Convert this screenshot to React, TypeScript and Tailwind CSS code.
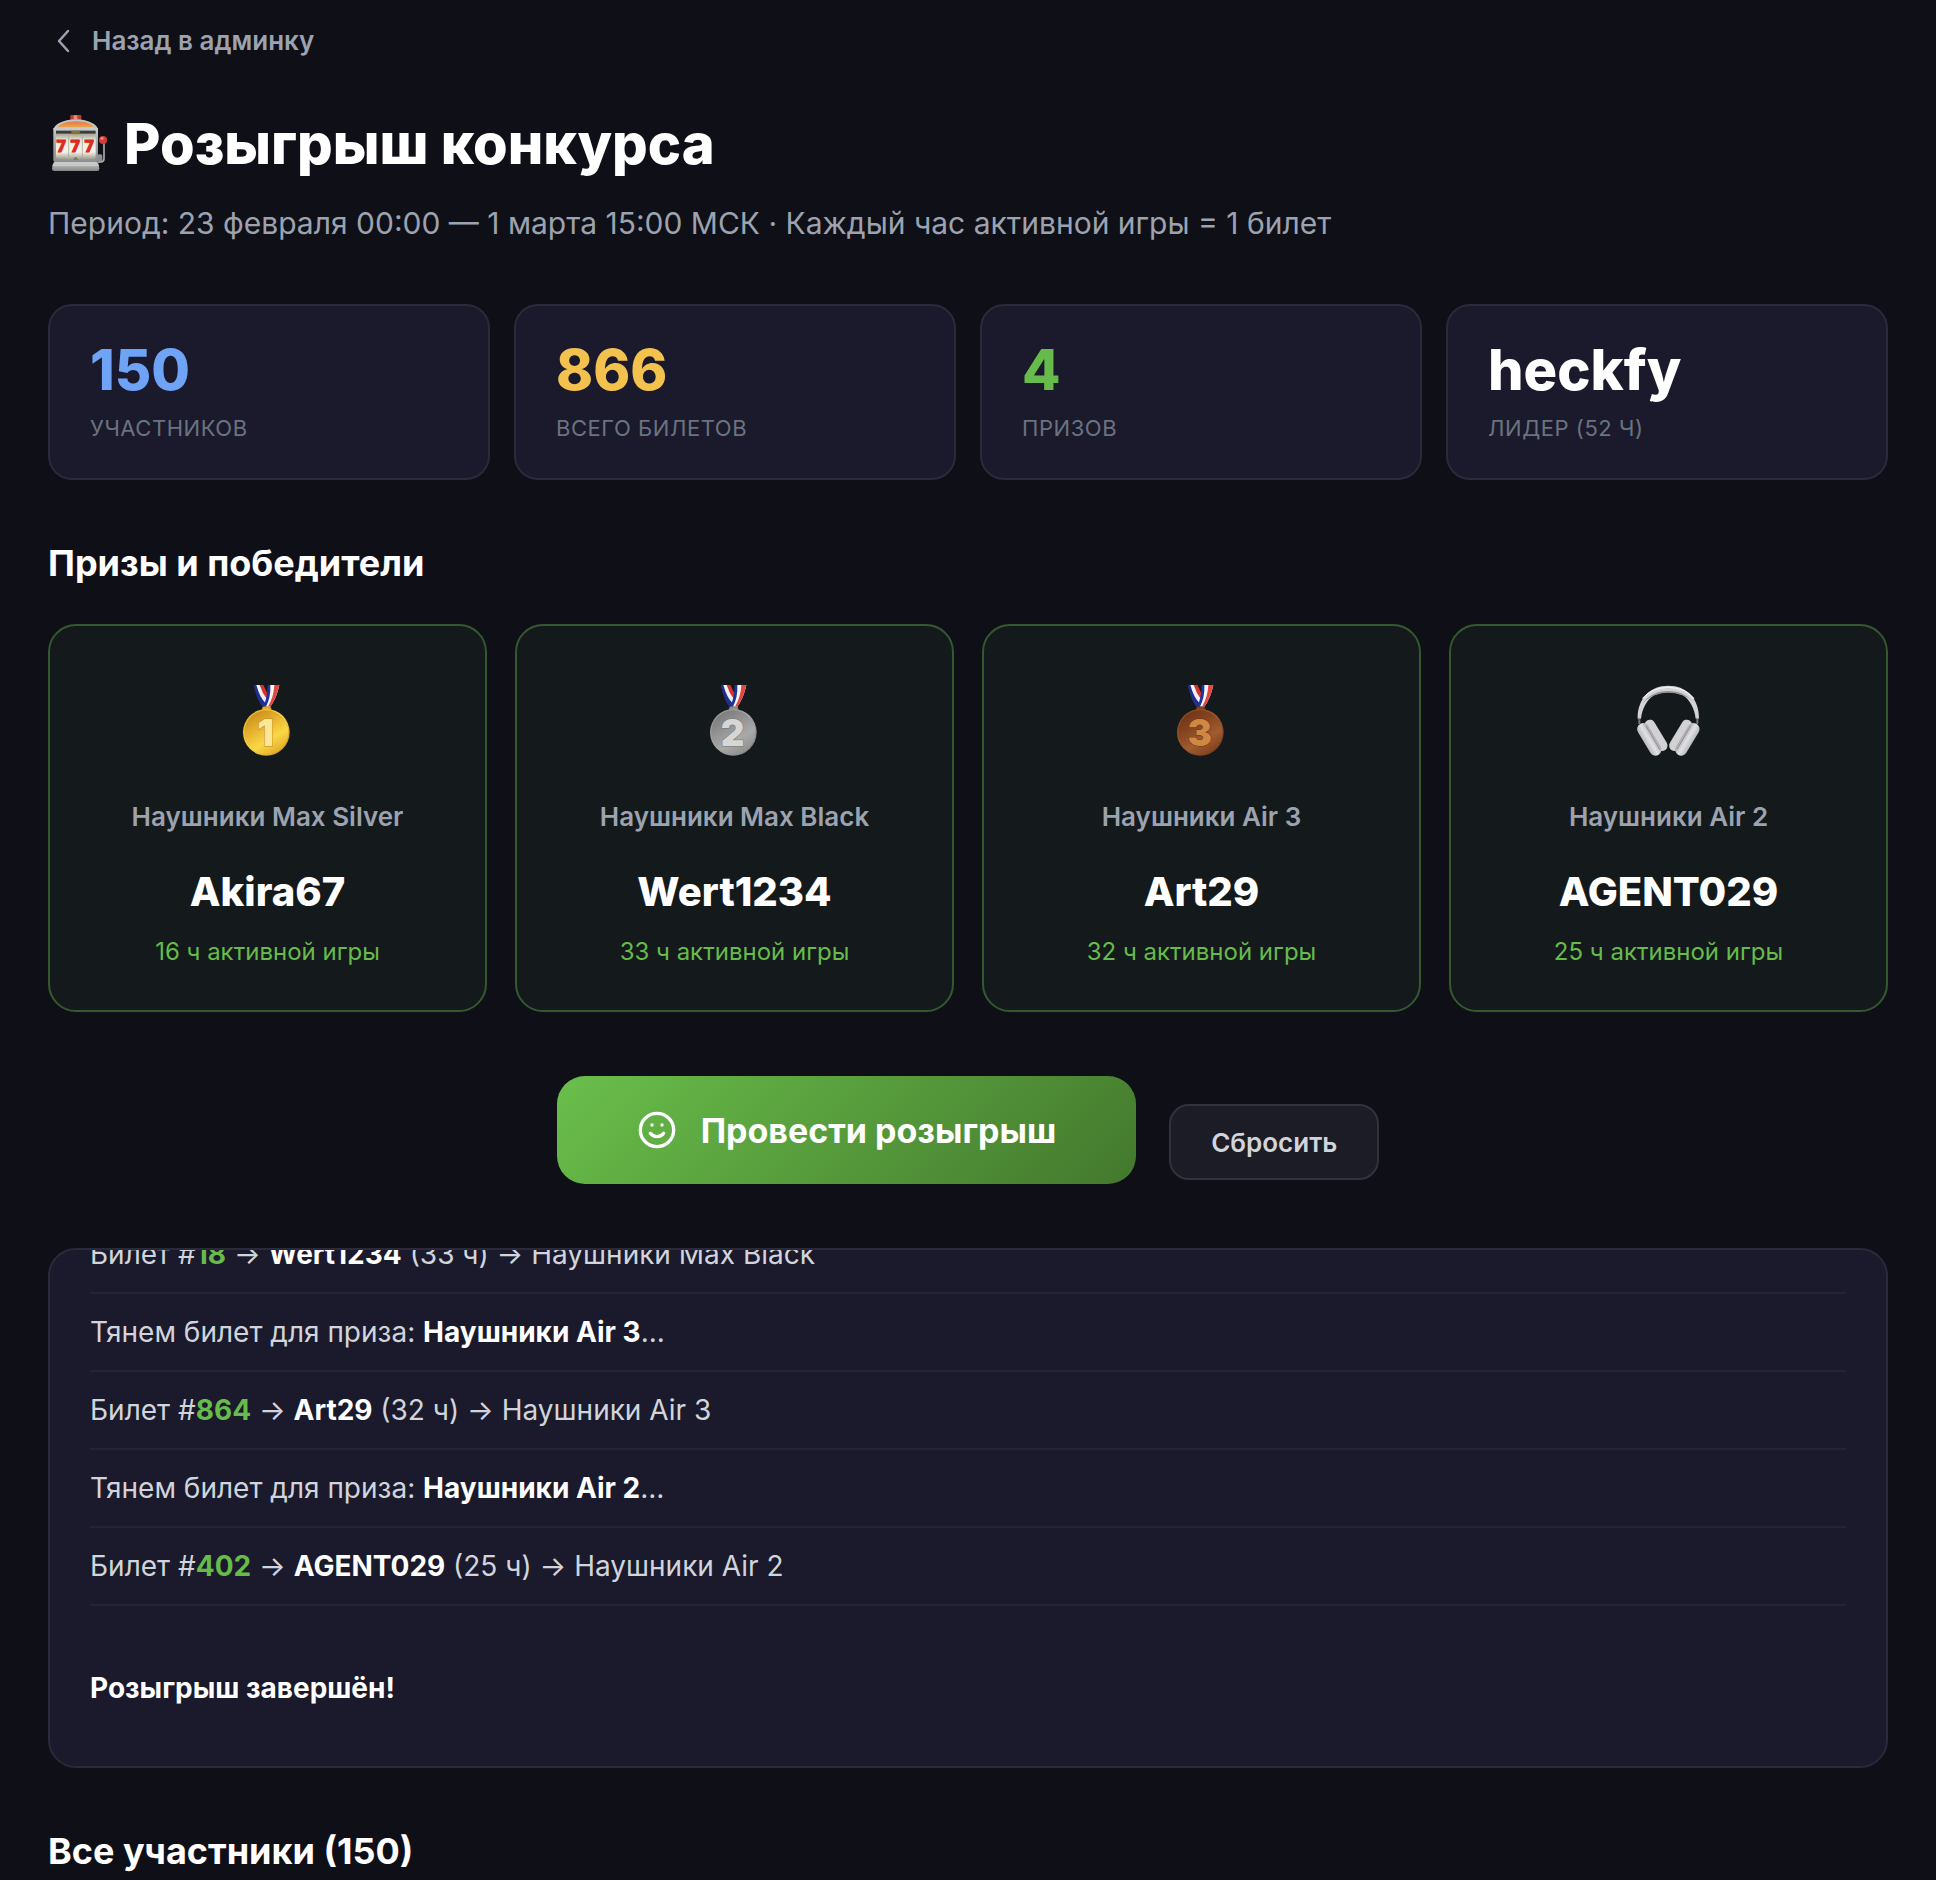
import React from 'react';
import { Smile } from 'lucide-react';

type Stat = { value: string; label: string; color: string };
type Medal = { digit: string; light: string; mid: string; dark: string; text: string };
type Winner = { id: string; prize: string; name: string; hours: number; medal?: Medal };
type LogEntry =
  | { kind: 'draw'; prize: string }
  | { kind: 'ticket'; ticket: number; name: string; hours: number; prize: string };

const stats: Stat[] = [
  { value: '150', label: 'Участников', color: 'text-[#6ea3f5]' },
  { value: '866', label: 'Всего билетов', color: 'text-[#f2c14e]' },
  { value: '4', label: 'Призов', color: 'text-[#66bb4a]' },
  { value: 'heckfy', label: 'Лидер (52 ч)', color: 'text-white' },
];

const winners: Winner[] = [
  {
    id: 'gold',
    prize: 'Наушники Max Silver',
    name: 'Akira67',
    hours: 16,
    medal: { digit: '1', light: '#f9d845', mid: '#e3ad2c', dark: '#c0851c', text: '#fbe796' },
  },
  {
    id: 'silver',
    prize: 'Наушники Max Black',
    name: 'Wert1234',
    hours: 33,
    medal: { digit: '2', light: '#a9a9a9', mid: '#8f8f8f', dark: '#757575', text: '#d6d6d6' },
  },
  {
    id: 'bronze',
    prize: 'Наушники Air 3',
    name: 'Art29',
    hours: 32,
    medal: { digit: '3', light: '#a05c30', mid: '#83421e', dark: '#6a3113', text: '#cf8843' },
  },
  { id: 'headphones', prize: 'Наушники Air 2', name: 'AGENT029', hours: 25 },
];

const log: LogEntry[] = [
  { kind: 'ticket', ticket: 18, name: 'Wert1234', hours: 33, prize: 'Наушники Max Black' },
  { kind: 'draw', prize: 'Наушники Air 3' },
  { kind: 'ticket', ticket: 864, name: 'Art29', hours: 32, prize: 'Наушники Air 3' },
  { kind: 'draw', prize: 'Наушники Air 2' },
  { kind: 'ticket', ticket: 402, name: 'AGENT029', hours: 25, prize: 'Наушники Air 2' },
];

function SlotMachine() {
  return (
    <svg viewBox="24 36 180 192" className="w-[60px] h-16 shrink-0" aria-hidden="true">
      <defs>
        <linearGradient id="slot-body" x1="0" y1="0" x2="0" y2="1">
          <stop offset="0" stopColor="#c9ccca" />
          <stop offset="0.5" stopColor="#a3a5a3" />
          <stop offset="1" stopColor="#8d8f8d" />
        </linearGradient>
        <linearGradient id="slot-reel" x1="0" y1="0" x2="0" y2="1">
          <stop offset="0" stopColor="#a9a797" />
          <stop offset="0.25" stopColor="#efede0" />
          <stop offset="0.7" stopColor="#f4f2e8" />
          <stop offset="1" stopColor="#98968a" />
        </linearGradient>
        <linearGradient id="slot-dome" x1="0" y1="0" x2="0" y2="1">
          <stop offset="0" stopColor="#e9755a" />
          <stop offset="1" stopColor="#e8a545" />
        </linearGradient>
        <linearGradient id="slot-base" x1="0" y1="0" x2="0" y2="1">
          <stop offset="0" stopColor="#d9dcda" />
          <stop offset="0.45" stopColor="#a9acaa" />
          <stop offset="1" stopColor="#858886" />
        </linearGradient>
      </defs>
      <rect x="91" y="45" width="33" height="17" rx="3" fill="#b54135" />
      <rect x="101" y="46" width="11" height="12" rx="2" fill="#f08a78" />
      <path d="M40 90 Q42 78 56 70 Q80 58 107 58 Q136 58 158 70 Q173 78 174 90 Z" fill="#c3c6c4" />
      <path d="M53 81 Q60 72 78 67 Q107 60 138 67 Q155 72 161 81 Z" fill="url(#slot-dome)" />
      <path d="M40 84 H174 V178 Q174 188 166 190 H48 Q40 188 40 178 Z" fill="url(#slot-body)" />
      <rect x="48" y="92" width="119" height="9" fill="#3b3b38" />
      <path d="M92 92 H122 L116 104 H98 Z" fill="#8b712b" />
      <path d="M48 103 H167 V168 Q167 178 156 179 H59 Q48 178 48 168 Z" fill="url(#slot-reel)" />
      <path d="M86 103 V179 M127 103 V179" stroke="#aaa89d" strokeWidth="2.5" />
      <path d="M98 179 L107 170 L116 179 Z" fill="#77735e" />
      <g fill="#dd2a20" stroke="#dd2a20" strokeWidth="3" fontFamily="Roboto, sans-serif" fontWeight="900" fontSize="50" textAnchor="middle">
        <text x="64" y="157">7</text>
        <text x="106" y="157">7</text>
        <text x="148" y="157">7</text>
      </g>
      <path d="M42 187 H172 Q178 194 178 206 Q178 213 171 213 H43 Q36 213 36 206 Q36 194 42 187 Z" fill="url(#slot-base)" />
      <path d="M38 196 H176" stroke="#dcdedd" strokeWidth="2" />
      <rect x="172" y="163" width="15" height="22" rx="5" fill="#8c8f8f" />
      <path d="M192 126 V176 Q192 185 182 186 L172 187" fill="none" stroke="#a7aaaa" strokeWidth="5" />
      <circle cx="189" cy="120" r="12" fill="#d63a38" />
      <circle cx="186" cy="115" r="5" fill="#f08078" />
    </svg>
  );
}

function MedalIcon({ id, medal }: { id: string; medal: Medal }) {
  return (
    <svg viewBox="49 36 192 240" className="w-16 h-20" aria-hidden="true">
      <defs>
        <linearGradient id={`${id}-rim`} x1="0" y1="0" x2="1" y2="1">
          <stop offset="0" stopColor={medal.mid} />
          <stop offset="0.5" stopColor={medal.light} />
          <stop offset="1" stopColor={medal.dark} />
        </linearGradient>
        <linearGradient id={`${id}-face`} x1="0.1" y1="0" x2="0.7" y2="1">
          <stop offset="0" stopColor={medal.dark} />
          <stop offset="0.35" stopColor={medal.mid} />
          <stop offset="0.7" stopColor={medal.light} />
          <stop offset="1" stopColor={medal.mid} />
        </linearGradient>
      </defs>
      <path d="M102 45 H128 L145 86 L134 112 L126 108 Q112 90 102 45 Z" fill="#1f2f8f" />
      <path d="M110 45 H128 L144 84 L138 100 Q120 82 110 45 Z" fill="#f2f2f5" />
      <path d="M120 45 H131 L146 76 L142 88 Q128 70 120 45 Z" fill="#d8322f" />
      <path d="M144 45 H179 Q172 82 151 112 H130 Q144 82 144 45 Z" fill="#1f33a0" />
      <path d="M152 45 H179 Q172 82 151 112 H138 Q154 82 152 45 Z" fill="#f5f5f8" />
      <path d="M164 45 H179 Q172 82 152 110 L146 108 Q162 82 164 45 Z" fill="#e2483f" />
      <rect x="128" y="110" width="26" height="13" rx="5" fill={medal.mid} stroke={medal.dark} strokeWidth="2" />
      <circle cx="140" cy="187" r="70" fill={`url(#${id}-rim)`} />
      <circle cx="140" cy="187" r="66" fill={`url(#${id}-face)`} />
      <text
        x="138"
        y="227"
        textAnchor="middle"
        fontFamily="Inter, sans-serif"
        fontWeight="900"
        fontSize="110"
        fill={medal.text}
        stroke={medal.dark}
        strokeWidth="3"
        paintOrder="stroke"
      >
        {medal.digit}
      </text>
    </svg>
  );
}

function HeadphonesIcon() {
  return (
    <svg viewBox="49 36 192 240" className="w-16 h-20" aria-hidden="true">
      <defs>
        <linearGradient id="hp-cup-left" x1="0" y1="0" x2="1" y2="0">
          <stop offset="0" stopColor="#b9b9bd" />
          <stop offset="0.5" stopColor="#e2e2e6" />
          <stop offset="1" stopColor="#a9a9ad" />
        </linearGradient>
        <linearGradient id="hp-cup-right" x1="1" y1="0" x2="0" y2="0">
          <stop offset="0" stopColor="#b9b9bd" />
          <stop offset="0.5" stopColor="#e2e2e6" />
          <stop offset="1" stopColor="#a9a9ad" />
        </linearGradient>
      </defs>
      <path
        d="M51 146 C50 86 88 47 143 47 C198 47 236 86 235 146 L225 146 C222 118 208 88 186 76 Q143 58 101 76 C78 88 64 118 61 146 Z"
        fill="#d3d3d5"
      />
      <path d="M66 101 Q92 63 143 63 Q194 63 220 101 Q206 82 184 75 Q143 62 103 75 Q80 84 66 101 Z" fill="#929294" />
      <path d="M66 86 Q94 52 143 52 Q192 52 220 86" fill="none" stroke="#f0f0f1" strokeWidth="4" />
      <path d="M56 145 V162 M230 145 V162" stroke="#77777a" strokeWidth="6" />
      <rect x="-16" y="-52" width="32" height="104" rx="16" transform="translate(106 196) rotate(-31)" fill="#d2d2d5" />
      <rect x="-18" y="-54" width="36" height="108" rx="18" transform="translate(86 208) rotate(-31)" fill="url(#hp-cup-left)" />
      <path d="M76 168 L117 238" stroke="#8e8e92" strokeWidth="3" strokeLinecap="round" />
      <rect x="-16" y="-52" width="32" height="104" rx="16" transform="translate(180 196) rotate(31)" fill="#d2d2d5" />
      <rect x="-18" y="-54" width="36" height="108" rx="18" transform="translate(200 208) rotate(31)" fill="url(#hp-cup-right)" />
      <path d="M210 168 L169 238" stroke="#8e8e92" strokeWidth="3" strokeLinecap="round" />
    </svg>
  );
}

function StatCard({ stat }: { stat: Stat }) {
  return (
    <div className="rounded-3xl border-2 border-[#2a2a3a] bg-[#1a1a2c] px-10 pt-8 pb-9">
      <p className={`text-[56px] leading-[64px] font-extrabold ${stat.color}`}>{stat.value}</p>
      <p className="mt-3 text-[22px] leading-7 tracking-wide uppercase text-[#6b7280]">{stat.label}</p>
    </div>
  );
}

function WinnerCard({ winner }: { winner: Winner }) {
  return (
    <article className="flex flex-col items-center rounded-[28px] border-2 border-[#35592f] bg-[#14191c] px-8 pt-14 pb-[42px] text-center">
      {winner.medal ? <MedalIcon id={winner.id} medal={winner.medal} /> : <HeadphonesIcon />}
      <p className="mt-9 text-[26px] leading-[38px] font-semibold text-[#9ca3af]">{winner.prize}</p>
      <h3 className="mt-8 text-[40px] leading-[48px] font-extrabold text-white">{winner.name}</h3>
      <p className="mt-5 text-[24px] leading-8 text-[#66bb4a]">{winner.hours} ч активной игры</p>
    </article>
  );
}

function LogRow({ entry }: { entry: LogEntry }) {
  return (
    <li className="shrink-0 border-b-2 border-[#232335] py-4">
      {entry.kind === 'draw' ? (
        <>
          Тянем билет для приза: <strong className="font-bold text-white">{entry.prize}</strong>...
        </>
      ) : (
        <>
          Билет #<span className="font-bold text-[#66bb4a]">{entry.ticket}</span> →{' '}
          <strong className="font-bold text-white">{entry.name}</strong> ({entry.hours} ч) → {entry.prize}
        </>
      )}
    </li>
  );
}

export default function App() {
  return (
    <main className="min-h-screen bg-[#0f0f18] px-12 pt-6 font-['Inter',sans-serif] text-white">
      <a href="#admin" className="flex w-fit items-center gap-3 text-[26px] leading-[34px] font-semibold text-[#9ca3af]">
        <svg viewBox="0 0 32 32" className="size-8" fill="none" stroke="currentColor" strokeWidth="2.5" strokeLinecap="round" strokeLinejoin="round" aria-hidden="true">
          <path d="M20 6 L11 16 L20 26" />
        </svg>
        Назад в админку
      </a>

      <h1 className="mt-[54px] flex items-center gap-4 text-[56px] leading-[64px] font-extrabold">
        <SlotMachine />
        Розыгрыш конкурса
      </h1>
      <p className="mt-7 text-[30px] leading-[38px] text-[#9ca3af]">
        Период: 23 февраля 00:00 — 1 марта 15:00 МСК · Каждый час активной игры = 1 билет
      </p>

      <section className="mt-[62px] grid grid-cols-4 gap-6">
        {stats.map((stat) => (
          <StatCard key={stat.label} stat={stat} />
        ))}
      </section>

      <h2 className="mt-[60px] text-[36px] leading-[46px] font-bold">Призы и победители</h2>
      <section className="mt-[38px] grid grid-cols-4 gap-7">
        {winners.map((winner) => (
          <WinnerCard key={winner.id} winner={winner} />
        ))}
      </section>

      <div className="mt-16 flex items-end justify-center gap-[33px]">
        <button
          type="button"
          className="flex h-[108px] items-center gap-6 rounded-[28px] bg-[linear-gradient(135deg,#6abf4b,#43782d)] px-20 text-[34px] font-bold text-white hover:cursor-pointer"
        >
          <Smile size={40} />
          Провести розыгрыш
        </button>
        <button
          type="button"
          className="mb-1 h-[76px] rounded-[20px] border-2 border-[#32323d] bg-[#1c1c26] px-10 text-[26px] font-semibold text-[#d1d5db] hover:cursor-pointer"
        >
          Сбросить
        </button>
      </div>

      {/* newest entries stay pinned to the bottom, older ones are cut at the top edge */}
      <ul className="mt-16 flex h-[520px] flex-col justify-end overflow-hidden rounded-[28px] border-2 border-[#2a2a3a] bg-[#1a1a2c] px-10 pb-10 text-[28px] leading-[44px] text-[#d1d5db]">
        {log.map((entry, i) => (
          <LogRow key={i} entry={entry} />
        ))}
        <li className="mt-11 shrink-0 py-4 font-bold text-white">Розыгрыш завершён!</li>
      </ul>

      <h2 className="mt-[60px] text-[36px] leading-[46px] font-bold">Все участники (150)</h2>
    </main>
  );
}
